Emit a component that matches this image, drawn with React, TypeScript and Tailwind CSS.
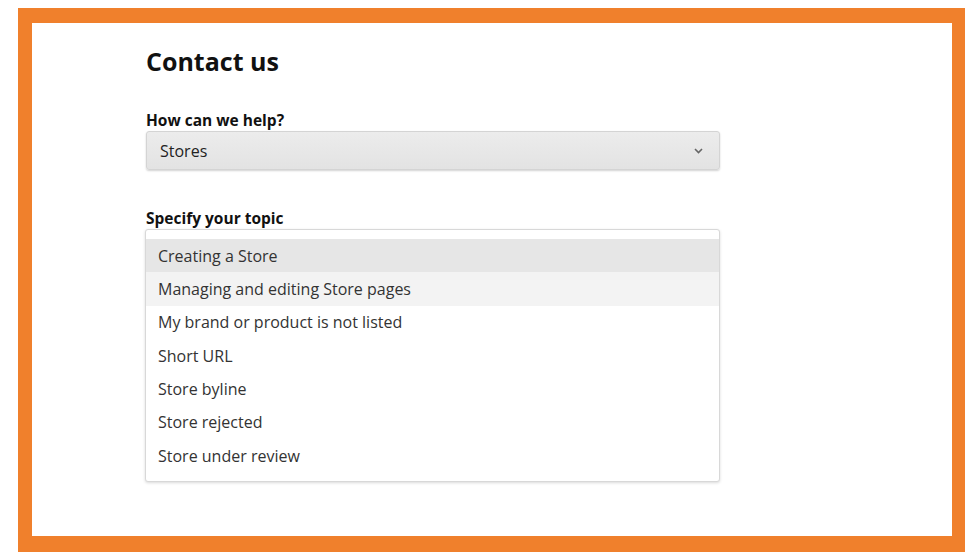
const TOPICS = [
  'Creating a Store',
  'Managing and editing Store pages',
  'My brand or product is not listed',
  'Short URL',
  'Store byline',
  'Store rejected',
  'Store under review',
];

export default function App() {
  return (
    <div className="w-[971px] h-[554px] bg-white pt-[8px] pl-[18px] font-['Open_Sans',sans-serif]">
      <div className="w-[947px] h-[544px] bg-white border-[#f0802c] border-l-[14px] border-t-[15px] border-r-[13px] border-b-[16px]">
        <div className="pl-[114px] pt-[21px] w-[688px]">
          <h1 className="text-[25px] leading-[34px] font-bold text-[#111]">Contact us</h1>

          <label className="block mt-[32px] text-[15.5px] leading-[20px] font-bold text-[#111]">
            How can we help?
          </label>
          <div className="mt-[1px] h-[39px] rounded-[3px] border border-[#d4d4d4] bg-gradient-to-b from-[#ececec] to-[#e3e3e3] shadow-[0_1px_2px_rgba(0,0,0,0.18)] flex items-center justify-between pl-[13px] pr-[16px]">
            <span className="text-[16px] text-[#222]">Stores</span>
            <svg width="9" height="6" viewBox="0 0 9 6" fill="none">
              <path d="M1 1l3.5 3.5L8 1" stroke="#666" strokeWidth="1.6" />
            </svg>
          </div>

          <label className="block mt-[38px] text-[15.5px] leading-[20px] font-bold text-[#111]">
            Specify your topic
          </label>
          <div className="mt-[1px] -ml-[1px] w-[575px] h-[253px] rounded-[3px] border border-[#d8d8d8] bg-white shadow-[0_1px_3px_rgba(0,0,0,0.15)] pt-[9px]">
            {TOPICS.map((t, i) => (
              <div
                key={t}
                className={`h-[33.33px] flex items-center pl-[12px] text-[16px] text-[#333] ${
                  i === 0 ? 'bg-[#e6e6e6]' : i === 1 ? 'bg-[#f3f3f3]' : ''
                }`}
              >
                {t}
              </div>
            ))}
          </div>
        </div>
      </div>
    </div>
  );
}
